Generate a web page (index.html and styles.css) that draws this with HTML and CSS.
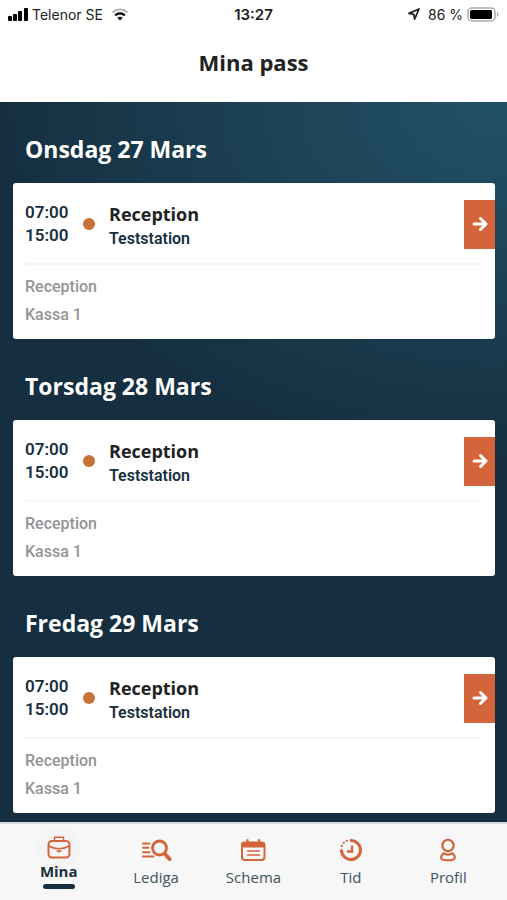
FILE: index.html
```
<!DOCTYPE html>
<html lang="sv">
<head>
  <meta charset="UTF-8">
  <meta name="viewport" content="width=device-width, initial-scale=1">
  <title>Mina pass</title>
  <link rel="stylesheet" href="styles.css">
</head>
<body>
  <div class="status-bar">
    <div class="status-left">
      <svg class="signal" width="20" height="13" viewBox="0 0 20 13">
        <rect x="0" y="8" width="4" height="5" rx="1"/>
        <rect x="5" y="6" width="4" height="7" rx="1"/>
        <rect x="10" y="3" width="4" height="10" rx="1"/>
        <rect x="16" y="0" width="4" height="13" rx="1"/>
      </svg>
      <span>Telenor SE</span>
      <svg class="wifi" width="18" height="13" viewBox="0 0 18 13" fill="none">
        <path d="M1.5 4.6C5.5 .4 12.5 .4 16.5 4.6" stroke="#b5b5b5" stroke-width="2"/>
        <path d="M4.2 7.3C6.8 4.7 11.2 4.7 13.8 7.3" stroke="#000" stroke-width="2.4"/>
        <path d="M9 12.5L6.3 9.8C7.8 8.5 10.2 8.5 11.7 9.8Z" fill="#000"/>
      </svg>
    </div>
    <span class="clock">13:27</span>
    <div class="status-right">
      <svg class="location" width="12" height="12" viewBox="0 0 12 12" fill="none" stroke="#222" stroke-width="1.8" stroke-linejoin="round">
        <path d="M11 1L1 5.3L5.7 6.3L6.7 11Z"/>
      </svg>
      <span>86 %</span>
      <svg class="battery" width="32" height="15" viewBox="0 0 32 15">
        <rect x="1" y="1" width="27" height="13" rx="4" fill="#fff" stroke="#aaa" stroke-width="1.5"/>
        <rect x="3" y="3" width="22" height="9" rx="1.5" fill="#000"/>
        <path d="M30 5C32 6 32 9 30 10Z" fill="#aaa"/>
      </svg>
    </div>
  </div>

  <header>
    <h1>Mina pass</h1>
  </header>

  <main>
    <section class="day">
      <h2>Onsdag 27 Mars</h2>
      <div class="card">
        <div class="shift">
          <div class="times">
            <time>07:00</time>
            <time>15:00</time>
          </div>
          <span class="dot"></span>
          <div class="place">
            <h3>Reception</h3>
            <p>Teststation</p>
          </div>
          <button class="open" aria-label="Visa pass">
            <svg width="16" height="16" viewBox="0 0 16 16"><path d="M2 8H14M8.5 2.5L14 8L8.5 13.5"/></svg>
          </button>
        </div>
        <div class="details">
          <p>Reception</p>
          <p>Kassa 1</p>
        </div>
      </div>
    </section>

    <section class="day">
      <h2>Torsdag 28 Mars</h2>
      <div class="card">
        <div class="shift">
          <div class="times">
            <time>07:00</time>
            <time>15:00</time>
          </div>
          <span class="dot"></span>
          <div class="place">
            <h3>Reception</h3>
            <p>Teststation</p>
          </div>
          <button class="open" aria-label="Visa pass">
            <svg width="16" height="16" viewBox="0 0 16 16"><path d="M2 8H14M8.5 2.5L14 8L8.5 13.5"/></svg>
          </button>
        </div>
        <div class="details">
          <p>Reception</p>
          <p>Kassa 1</p>
        </div>
      </div>
    </section>

    <section class="day">
      <h2>Fredag 29 Mars</h2>
      <div class="card">
        <div class="shift">
          <div class="times">
            <time>07:00</time>
            <time>15:00</time>
          </div>
          <span class="dot"></span>
          <div class="place">
            <h3>Reception</h3>
            <p>Teststation</p>
          </div>
          <button class="open" aria-label="Visa pass">
            <svg width="16" height="16" viewBox="0 0 16 16"><path d="M2 8H14M8.5 2.5L14 8L8.5 13.5"/></svg>
          </button>
        </div>
        <div class="details">
          <p>Reception</p>
          <p>Kassa 1</p>
        </div>
      </div>
    </section>
  </main>

  <nav class="tabs">
    <a class="tab active" href="#mina">
      <svg width="28" height="28" viewBox="0 0 28 28">
        <rect x="3.5" y="8" width="21" height="16.5" rx="3.5"/>
        <path d="M9.5 7.500V4.2H18.500V7.500" stroke-width="1.5"/>
        <path d="M4 13C10 16.8 18 16.8 24 13" stroke-width="1.5"/>
        <path d="M12 17.8C12.5 19.2 15.5 19.2 16 17.8Z" stroke-width="1.2"/>
      </svg>
      <span>Mina</span>
    </a>
    <a class="tab" href="#lediga">
      <svg width="32" height="28" viewBox="0 0 32 28">
        <circle cx="19.5" cy="11" r="7" stroke-width="2.8"/>
        <path d="M24.5 16.5L29.5 22" stroke-width="4"/>
        <path d="M3 6.500H9.500M3 10.800H8.500M3 15.200H9.500M3 19.500H13.500" stroke-width="1.9"/>
      </svg>
      <span>Lediga</span>
    </a>
    <a class="tab" href="#schema">
      <svg width="28" height="28" viewBox="0 0 28 28">
        <rect x="3" y="5.5" width="22.500" height="17.500" rx="3"/>
        <path d="M3.5 6H25V9.500H3.5Z" fill="#d4643a"/>
        <path d="M8.500 3V7M20 3V7" stroke-width="2.2"/>
        <path d="M8.500 14H20.500M8.500 18H20.500" stroke-width="1.5"/>
      </svg>
      <span>Schema</span>
    </a>
    <a class="tab" href="#tid">
      <svg width="28" height="28" viewBox="0 0 28 28">
        <path d="M13 3.600A9.500 9.500 0 1 1 4.500 12.500" stroke-width="3" stroke-linecap="butt"/>
        <path d="M15 8.500V14.500H10" stroke-width="2.4" stroke-linecap="butt" stroke-linejoin="miter"/>
        <path d="M4.700 9V9M6.800 5.800V5.800M9.800 3.800V3.800" stroke-width="2.3"/>
      </svg>
      <span>Tid</span>
    </a>
    <a class="tab" href="#profil">
      <svg width="28" height="28" viewBox="0 0 28 28">
        <circle cx="14" cy="8.5" r="5.6" stroke-width="2.3"/>
        <path d="M10 16.300C8 17 7.200 19 7.200 21C7.200 24 20.800 24 20.800 21C20.800 19 20 17 18 16.300C16 18 12 18 10 16.300Z" stroke-width="2.1"/>
      </svg>
      <span>Profil</span>
    </a>
  </nav>
</body>
</html>
```

FILE: styles.css
```
* {
  box-sizing: border-box;
}

body {
  font-family: "Open Sans", sans-serif;
  margin: 0;
  min-height: 100vh;
  display: flex;
  flex-direction: column;
  background-color: #fff;
}

h1, h2, h3, p {
  margin: 0;
}

.status-bar {
  display: grid;
  grid-template-columns: 1fr auto 1fr;
  align-items: center;
  height: 28px;
  padding: 0 8px;
  font-family: Inter, sans-serif;
  font-size: 14px;
  color: #222;
}

.status-left,
.status-right {
  display: flex;
  align-items: center;
  gap: 4px;
}

.status-right {
  justify-content: flex-end;
}

.wifi {
  margin-left: 4px;
}

.location {
  margin-right: 4px;
}

.clock {
  font-size: 15px;
  font-weight: 600;
}

header {
  height: 74px;
  padding-top: 19px;
  text-align: center;
}

h1 {
  font-size: 22px;
  line-height: 30px;
  font-weight: 700;
  color: #222;
}

main {
  flex: 1;
  padding: 0 12px 9px 13px;
  background: radial-gradient(ellipse 100% 360px at 100% 0, #225168 0%, #1d4357 45%, #152f40 100%) #152f40;
}

.day h2 {
  padding: 32px 12px 19px;
  font-size: 23px;
  line-height: 30px;
  font-weight: 700;
  color: #fff;
}

.card {
  background-color: #fff;
  border-radius: 3px;
}

.shift {
  display: flex;
  align-items: center;
  height: 82px;
  margin: 0 12px;
  padding-top: 2px;
  border-bottom: 2px solid #f7f7f7;
}

.times {
  width: 58px;
  font-family: Roboto, sans-serif;
  font-size: 17px;
  line-height: 23px;
  font-weight: 600;
  color: #17303f;
}

.times time {
  display: block;
}

.dot {
  width: 12px;
  height: 12px;
  border-radius: 50%;
  background-color: #c87137;
}

.place {
  flex: 1;
  padding: 4px 0 0 14px;
}

.place h3 {
  font-size: 18px;
  line-height: 26px;
  font-weight: 700;
  color: #222;
}

.place p {
  font-family: Roboto, sans-serif;
  font-size: 16px;
  line-height: 24px;
  font-weight: 600;
  color: #17303f;
}

.open {
  display: flex;
  align-items: center;
  justify-content: center;
  width: 31px;
  height: 49px;
  margin-right: -12px;
  padding: 0;
  border: none;
  background-color: #d4643a;
  cursor: pointer;
}

.open svg {
  fill: none;
  stroke: #fff;
  stroke-width: 3;
  stroke-linecap: round;
  stroke-linejoin: round;
}

.details {
  padding: 8px 12px 10px;
  font-family: Roboto, sans-serif;
  font-size: 16px;
  line-height: 28px;
  font-weight: 500;
  color: #929496;
}

.tabs {
  display: grid;
  grid-template-columns: repeat(5, 1fr);
  height: 78px;
  padding: 0 10px;
  background-color: #f7f7f7;
  border-top: 2px solid #d5d9db;
}

.tab {
  display: flex;
  flex-direction: column;
  align-items: center;
  gap: 2px;
  padding-top: 13px;
  font-size: 15px;
  line-height: 20px;
  color: #405560;
  text-decoration: none;
}

.tab svg {
  fill: none;
  stroke: #d4643a;
  stroke-width: 2;
  stroke-linecap: round;
  stroke-linejoin: round;
}

.tab.active {
  gap: 0;
  padding-top: 9px;
  font-weight: 700;
  color: #17303f;
  background: radial-gradient(circle at 50% 24px, #f4f4f4 21px, transparent 23px);
}

.tab.active::after {
  content: "";
  width: 32px;
  height: 5px;
  margin-top: 3px;
  border-radius: 3px;
  background-color: #17303f;
}
```
